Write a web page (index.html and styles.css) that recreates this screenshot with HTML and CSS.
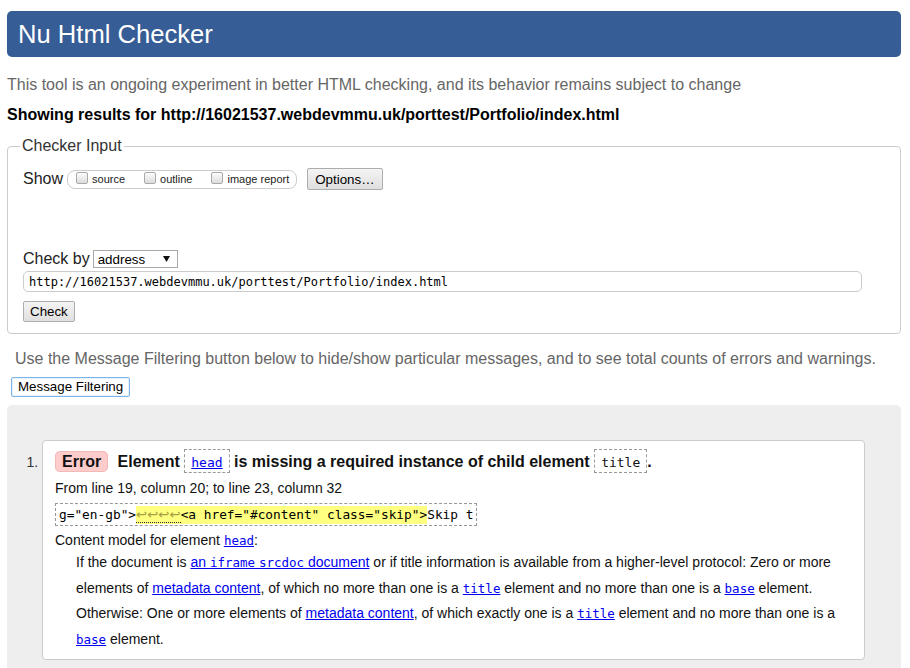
FILE: index.html
```html
<!DOCTYPE html>
<html lang="en">
<head>
<meta charset="utf-8">
<title>Showing results for http://16021537.webdevmmu.uk/porttest/Portfolio/index.html - Nu Html Checker</title>
<link rel="stylesheet" href="styles.css">
</head>
<body>
<h1 class="site-title">Nu Html Checker</h1>
<p class="intro">This tool is an ongoing experiment in better HTML checking, and its behavior remains subject to change</p>
<p class="results-for">Showing results for http://16021537.webdevmmu.uk/porttest/Portfolio/index.html</p>
<fieldset class="checker-input">
  <legend>Checker Input</legend>
  <div class="show-row">
    <span class="row-label">Show</span>
    <span class="show-group">
      <label class="opt"><input type="checkbox" class="cb"><span>source</span></label>
      <label class="opt"><input type="checkbox" class="cb"><span>outline</span></label>
      <label class="opt"><input type="checkbox" class="cb"><span>image report</span></label>
    </span>
    <button class="btn options-btn" type="button">Options…</button>
  </div>
  <div class="checkby-row">
    <span class="row-label">Check by</span>
    <span class="select"><span>address</span><svg class="caret" width="7" height="6" viewBox="0 0 7 6"><polygon points="0,0 7,0 3.5,6" fill="#111"/></svg></span>
  </div>
  <div class="url-input">http://16021537.webdevmmu.uk/porttest/Portfolio/index.html</div>
  <button class="btn check-btn" type="button">Check</button>
</fieldset>
<p class="filter-note">Use the Message Filtering button below to hide/show particular messages, and to see total counts of errors and warnings.</p>
<button class="btn filter-btn" type="button">Message Filtering</button>
<div class="results">
  <ol class="messages">
    <li class="message">
      <p class="msg-head"><span class="badge">Error</span> Element <code class="boxed"><a href="#">head</a></code> is missing a required instance of child element <code class="boxed">title</code>.</p>
      <p class="location">From line 19, column 20; to line 23, column 32</p>
      <div class="extract"><code>g="en-gb"&gt;<b class="hl"><span class="lf">↩↩↩↩</span>&lt;a href="#content" class="skip"&gt;</b>Skip t</code></div>
      <dl class="content-model">
        <dt>Content model for element <a href="#"><code>head</code></a>:</dt>
        <dd>
          <p>If the document is <a href="#">an <code>iframe</code> <code>srcdoc</code> document</a> or if title information is available from a higher-level protocol: Zero or more elements of <a href="#">metadata content</a>, of which no more than one is a <a href="#"><code>title</code></a> element and no more than one is a <a href="#"><code>base</code></a> element.</p>
          <p>Otherwise: One or more elements of <a href="#">metadata content</a>, of which exactly one is a <a href="#"><code>title</code></a> element and no more than one is a <a href="#"><code>base</code></a> element.</p>
        </dd>
      </dl>
    </li>
  </ol>
</div>
</body>
</html>
```
FILE: styles.css
```css
* { box-sizing: border-box; }

body {
  margin: 0;
  padding: 11px 9px 0 7px;
  font-family: "Liberation Sans", Arial, sans-serif;
  color: #000;
  background: #fff;
}

.site-title {
  margin: 0;
  height: 46px;
  line-height: 46px;
  padding-left: 11px;
  background: #365d95;
  color: #fff;
  font-size: 25.6px;
  font-weight: normal;
  border-radius: 5px;
}

.intro {
  margin: 18px 0 0;
  font-size: 16px;
  line-height: 20px;
  color: #666;
}

.results-for {
  margin: 10px 0 0;
  font-size: 16px;
  line-height: 20px;
  font-weight: bold;
}

.checker-input {
  margin: 11px 0 0;
  padding: 12px 38px 11px 15px;
  border: 1px solid #ccc;
  border-radius: 4px;
  min-width: 0;
}

.checker-input legend {
  padding: 0 2px;
  margin-left: -3px;
  font-size: 16px;
  line-height: 20px;
  color: #333;
}

.row-label {
  font-size: 16px;
  line-height: 20px;
  color: #222;
}

.show-row {
  display: flex;
  align-items: center;
  height: 22px;
}

.show-row .row-label { margin-right: 4px; }

.show-group {
  display: inline-flex;
  align-items: center;
  height: 19px;
  border: 1px solid #ccc;
  border-radius: 8px;
  padding: 0 7px 0 8px;
}

.opt {
  display: inline-flex;
  align-items: center;
  font-size: 11px;
  color: #222;
}

.opt + .opt { margin-left: 19px; }

.cb {
  appearance: none;
  -webkit-appearance: none;
  width: 12px;
  height: 12px;
  margin: -2px 4px 0 0;
  border: 1px solid #a9a9a9;
  border-radius: 2px;
  background: linear-gradient(#fcfcfc, #dcdcdc);
}

.btn {
  font-family: "Liberation Sans", Arial, sans-serif;
  font-size: 13.33px;
  color: #000;
  border: 1px solid #adadad;
  border-radius: 2px;
  background: linear-gradient(#f4f4f4, #dfdfdf);
  padding: 0 5px;
  height: 21px;
  line-height: 19px;
}

.options-btn {
  margin-left: 10px;
  height: 22px;
  padding: 0 7px;
}

.checkby-row {
  display: flex;
  align-items: center;
  height: 18px;
  margin-top: 60px;
}

.checkby-row .row-label { margin-right: 3px; }

.select {
  display: flex;
  align-items: center;
  justify-content: space-between;
  width: 85px;
  height: 18px;
  border: 1px solid #a9a9a9;
  padding: 0 7px 0 4px;
  font-size: 13.33px;
  background: #fff;
}

.url-input {
  margin-top: 3px;
  height: 21px;
  border: 1px solid #ccc;
  border-radius: 5px;
  padding: 0 5px;
  font-family: "DejaVu Sans Mono", "Liberation Mono", monospace;
  font-size: 12px;
  line-height: 20px;
}

.check-btn {
  display: block;
  margin-top: 9px;
  padding: 0 6px;
}

.filter-note {
  margin: 15px 0 0 8px;
  font-size: 16px;
  line-height: 20px;
  color: #666;
}

.filter-btn {
  display: block;
  margin: 8px 0 0 4px;
  height: 20px;
  line-height: 18px;
  padding: 0 6px;
  background: #fff;
  border: 1px solid #7eb4ea;
  border-radius: 2px;
  box-shadow: inset 0 0 0 1px #e5f1fb;
}

.results {
  margin-top: 8px;
  background: #eee;
  border-radius: 5px 5px 0 0;
  padding: 35px 36px 20px 35px;
}

.messages {
  margin: 0;
  padding: 0;
  list-style: decimal outside;
}

.message {
  background: #fff;
  border: 1px solid #ccc;
  border-radius: 4px;
  padding: 8px 15px 7px 12px;
  font-size: 14px;
  color: #111;
}

.message::marker {
  font-size: 14px;
  color: #333;
}

.message p { margin: 0; }

.msg-head {
  font-size: 16px;
  font-weight: bold;
  line-height: 25px;
  margin-bottom: 3px !important;
}

.badge {
  background: #fcc;
  border: 1px solid #f3b9b9;
  border-radius: 5px;
  padding: 1px 6px;
  margin-right: 5px;
}

code {
  font-family: "DejaVu Sans Mono", "Liberation Mono", monospace;
  font-weight: normal;
  font-size: 12.5px;
}

.boxed {
  font-size: 13px;
  border: 1px dashed #999;
  padding: 5px 6px 2px;
}

a { color: #00e; }

.location {
  line-height: 20px;
}

.extract {
  display: flex;
  margin-top: 5px;
}

.extract code {
  font-size: 12.8px;
  line-height: 15px;
  border: 1px dashed #999;
  padding: 3px;
  color: #000;
}

.hl {
  font-weight: normal;
  background: #ffff80;
  padding: 1px 0 2px;
}

.lf {
  font-family: "DejaVu Sans", sans-serif;
  font-size: 13.3px;
  color: #a8a040;
  border-bottom: 1px dotted #333;
}

.content-model {
  margin: 5px 0 0;
}

.content-model dt {
  line-height: 19px;
}

.content-model dd {
  margin: 0 0 0 21px;
}

.content-model dd p {
  line-height: 25.5px;
}
```
